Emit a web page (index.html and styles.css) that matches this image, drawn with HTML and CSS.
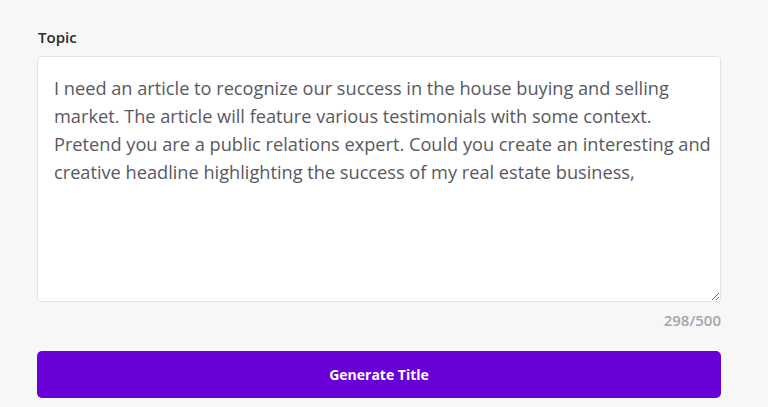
FILE: index.html
```html
<!DOCTYPE html>
<html>
<head>
<meta charset="utf-8">
<link rel="stylesheet" href="styles.css">
</head>
<body>
<div class="form">
  <label class="label" for="topic">Topic</label>
  <textarea id="topic" class="topic">I need an article to recognize our success in the house buying and selling market. The article will feature various testimonials with some context. Pretend you are a public relations expert. Could you create an interesting and creative headline highlighting the success of my real estate business,</textarea>
  <div class="counter">298/500</div>
  <button class="generate">Generate Title</button>
</div>
</body>
</html>
```
FILE: styles.css
```css
html, body {
  margin: 0;
  padding: 0;
  background: #f7f7f7;
}
body {
  font-family: "Open Sans", "Liberation Sans", sans-serif;
}
.form {
  display: flex;
  flex-direction: column;
  padding: 27px 47px 0 37px;
}
.label {
  font-size: 15px;
  font-weight: 600;
  color: #2a2a2a;
  padding-left: 1px;
  line-height: 20px;
  margin-bottom: 9px;
}
.topic {
  box-sizing: border-box;
  width: 100%;
  height: 246px;
  margin: 0;
  border: 1px solid #e0e4e8;
  border-radius: 4px;
  background: #fff;
  padding: 17px 6px 17px 16px;
  font-family: "Open Sans", "Liberation Sans", sans-serif;
  font-size: 18.2px;
  line-height: 28px;
  color: #585863;
  resize: vertical;
  outline: none;
  overflow: hidden;
}
.counter {
  text-align: right;
  font-size: 15px;
  font-weight: 600;
  color: #a3a6ad;
  line-height: 20px;
  margin-top: 8px;
}
.generate {
  margin-top: 21px;
  height: 47px;
  border: none;
  border-radius: 5px;
  background: #6a00d8;
  color: #fff;
  font-family: "Open Sans", "Liberation Sans", sans-serif;
  font-size: 14px;
  font-weight: 700;
  cursor: pointer;
}
```
